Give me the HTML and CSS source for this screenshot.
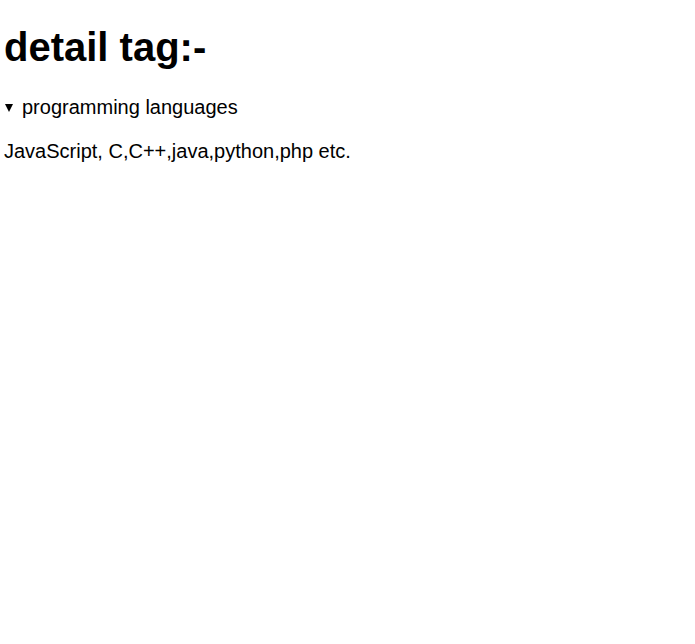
FILE: index.html
```html
<!DOCTYPE html>
<html>
<head>
<meta charset="utf-8">
<link rel="stylesheet" href="styles.css">
</head>
<body class="page">
<h1 class="title">detail tag:-</h1>
<details class="det" open>
<summary class="sum">programming languages</summary>
<p class="txt">JavaScript, C,C++,java,python,php etc.</p>
</details>
</body>
</html>
```
FILE: styles.css
```css
.page {
  margin: 4px;
  font-family: "Liberation Sans", Arial, sans-serif;
  font-size: 20px;
  color: #000;
  background: #fff;
}
.title {
  font-size: 40px;
  font-weight: bold;
  margin: 21px 0 26px;
}
.det {
  display: block;
}
.sum {
  display: block;
  list-style: none;
  cursor: pointer;
}
.sum::-webkit-details-marker {
  display: none;
}
.sum::before {
  content: "";
  display: inline-block;
  width: 0;
  height: 0;
  border-left: 4.5px solid transparent;
  border-right: 4.5px solid transparent;
  border-top: 8px solid #000;
  margin-left: 1px;
  margin-right: 9px;
  vertical-align: 2px;
}
.txt {
  margin: 21px 0;
}
```
